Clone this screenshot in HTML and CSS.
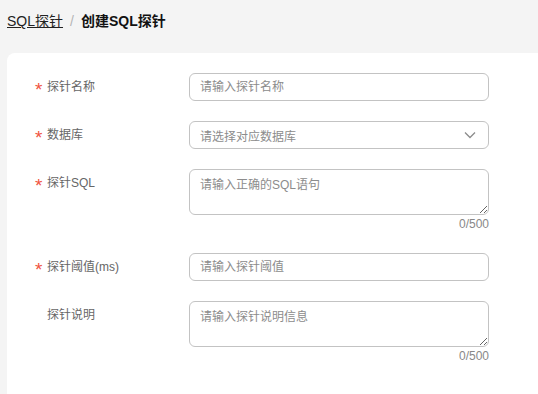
FILE: index.html
```html
<!DOCTYPE html>
<html lang="zh-CN">
<head>
  <meta charset="UTF-8">
  <title>创建SQL探针</title>
  <link rel="stylesheet" href="styles.css">
</head>
<body>
  <div class="breadcrumb">
    <a href="#" class="crumb-link">SQL探针</a>
    <span class="crumb-sep">/</span>
    <span class="crumb-current">创建SQL探针</span>
  </div>

  <div class="card">
    <form class="form">
      <div class="form-item">
        <label class="form-label required">探针名称</label>
        <div class="form-control">
          <input class="input" type="text" placeholder="请输入探针名称">
        </div>
      </div>

      <div class="form-item">
        <label class="form-label required">数据库</label>
        <div class="form-control">
          <div class="select">
            <span class="select-placeholder">请选择对应数据库</span>
            <svg class="select-arrow" viewBox="0 0 12 8">
              <path d="M1 1.5l5 5 5-5" />
            </svg>
          </div>
        </div>
      </div>

      <div class="form-item">
        <label class="form-label required">探针SQL</label>
        <div class="form-control">
          <textarea class="textarea" placeholder="请输入正确的SQL语句"></textarea>
          <div class="counter">0/500</div>
        </div>
      </div>

      <div class="form-item">
        <label class="form-label required">探针阈值(ms)</label>
        <div class="form-control">
          <input class="input" type="text" placeholder="请输入探针阈值">
        </div>
      </div>

      <div class="form-item">
        <label class="form-label">探针说明</label>
        <div class="form-control">
          <textarea class="textarea" placeholder="请输入探针说明信息"></textarea>
          <div class="counter">0/500</div>
        </div>
      </div>
    </form>
  </div>
</body>
</html>
```

FILE: styles.css
```css
* {
  margin: 0;
  padding: 0;
  box-sizing: border-box;
}

body {
  font-family: "Liberation Sans", Arial, "Noto Sans CJK SC", sans-serif;
  background-color: #f4f4f4;
  color: #333;
  padding-left: 7px;
  height: 100vh;
  display: flex;
  flex-direction: column;
  overflow: hidden;
}

.breadcrumb {
  display: flex;
  align-items: center;
  gap: 7px;
  font-size: 14px;
  line-height: 20px;
  padding-top: 11px;
  margin-bottom: 22px;
}

.crumb-link {
  color: #222;
  text-decoration: underline;
}

.crumb-sep {
  color: #b5b5b5;
}

.crumb-current {
  color: #111;
  font-weight: 700;
}

.card {
  flex: 1;
  background-color: #ffffff;
  border-radius: 8px 0 0 0;
  padding: 20px 0 0 28px;
}

.form-item {
  display: flex;
  align-items: flex-start;
  margin-bottom: 20px;
}

.form-label {
  width: 154px;
  flex-shrink: 0;
  font-size: 12px;
  line-height: 28px;
  color: #666;
  padding-left: 12px;
  position: relative;
}

.form-label.required::before {
  content: "*";
  position: absolute;
  left: 0;
  top: 3px;
  color: #f0533f;
  font-size: 19px;
  line-height: 28px;
}

.form-control {
  width: 300px;
}

.input,
.select,
.textarea {
  display: block;
  width: 100%;
  border: 1px solid #c3c3c3;
  border-radius: 6px;
  background: #fff;
  font-family: inherit;
  font-size: 12px;
  color: #333;
  outline: none;
}

.input {
  height: 28px;
  padding: 0 10px;
}

.input::placeholder,
.textarea::placeholder {
  color: #8c8c8c;
}

.select {
  height: 28px;
  padding: 0 10px;
  display: flex;
  align-items: center;
  justify-content: space-between;
}

.select-placeholder {
  color: #8c8c8c;
}

.select-arrow {
  width: 12px;
  height: 8px;
  margin-right: 2px;
  fill: none;
  stroke: #8c8c8c;
  stroke-width: 1.3;
}

.textarea {
  height: 46px;
  padding: 6px 10px;
  line-height: 18px;
  resize: vertical;
}

.counter {
  text-align: right;
  font-size: 12px;
  line-height: 18px;
  color: #888;
}
```
